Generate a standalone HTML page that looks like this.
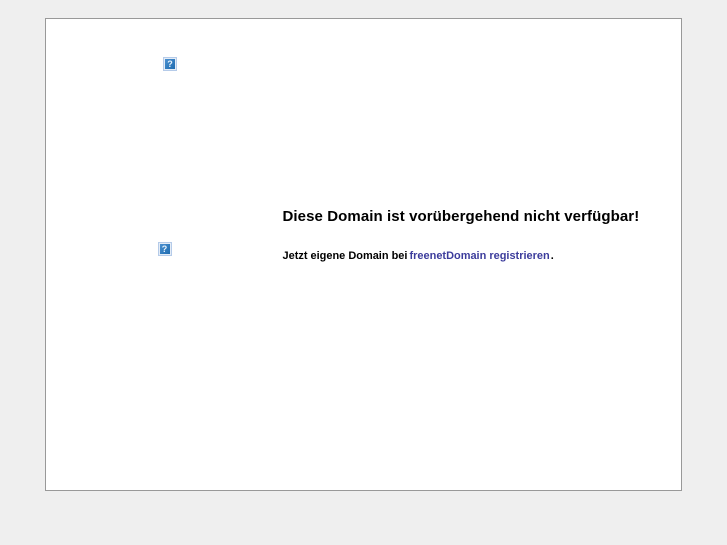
<!DOCTYPE html>
<html lang="de">
<head>
<meta charset="utf-8">
<title>Diese Domain ist vorübergehend nicht verfügbar!</title>
<style>
html,body{margin:0;padding:0;width:727px;height:545px;overflow:hidden;background:#efefef;}
body{position:relative;font-family:"Liberation Sans",Arial,sans-serif;color:#000;}
#box{position:absolute;left:45px;top:18px;width:635px;height:471px;background:#fff;border:1px solid #999;}
.ico{position:absolute;width:14px;height:14px;box-sizing:border-box;background:#e4ecf6;border:1px solid #b5cbe9;padding:1px;filter:blur(.3px);}
.ico div{width:10px;height:10px;background:linear-gradient(135deg,#4a90d0,#1f6cb0);color:#e8f2fb;font:bold 9px/10px "Liberation Sans",sans-serif;text-align:center;}
#h{position:absolute;left:282.5px;top:208px;font-size:15px;line-height:17px;font-weight:bold;white-space:nowrap;letter-spacing:.09px;filter:blur(.25px);}
#p{position:absolute;left:282.5px;top:250px;font-size:10.97px;line-height:13px;font-weight:bold;white-space:nowrap;filter:blur(.25px);}
#p a{color:#3c3c9c;text-decoration:none;margin-left:-1px;margin-right:1px;}
</style>
</head>
<body>
<div id="box"></div>
<div class="ico" style="left:163px;top:57px"><div>?</div></div>
<div class="ico" style="left:157.5px;top:242px"><div>?</div></div>
<div id="h">Diese Domain ist vorübergehend nicht verfügbar!</div>
<div id="p">Jetzt eigene Domain bei <a href="#">freenetDomain registrieren</a>.</div>
</body>
</html>
